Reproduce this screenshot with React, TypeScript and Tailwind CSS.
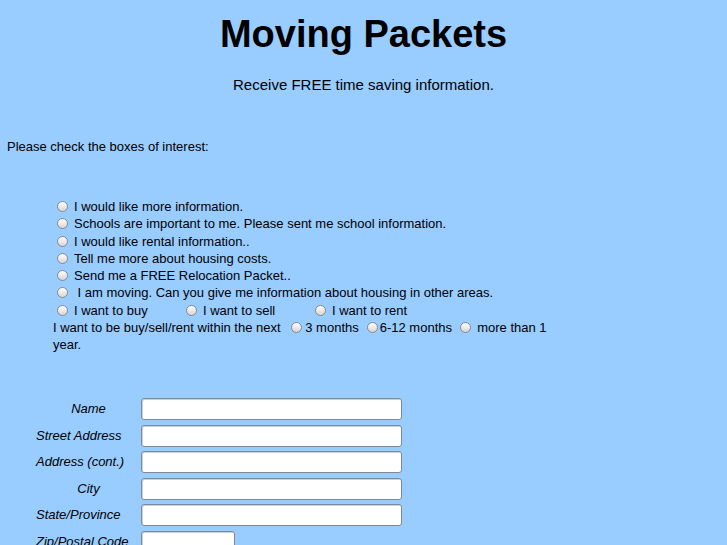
const Radio = ({ className = "" }: { className?: string }) => (
  <span
    className={
      "inline-block w-[11px] h-[11px] rounded-full border border-[#8a8a8a] bg-linear-to-b from-[#ffffff] to-[#d6d6d6] align-[-1px] " +
      className
    }
  />
);

const options = [
  "I would like more information.",
  "Schools are important to me. Please sent me school information.",
  "I would like rental information..",
  "Tell me more about housing costs.",
  "Send me a FREE Relocation Packet..",
  "\u00a0I am moving. Can you give me information about housing in other areas.",
];

const fields = [
  { label: "Name", center: true, wide: true },
  { label: "Street Address", center: false, wide: true },
  { label: "Address (cont.)", center: false, wide: true },
  { label: "City", center: true, wide: true },
  { label: "State/Province", center: false, wide: true },
  { label: "Zip/Postal Code", center: false, wide: false },
];

const App = () => {
  return (
    <div className="min-h-screen bg-[#99ccff] text-black font-['Liberation_Sans',Arial,sans-serif] overflow-hidden">
      <h1 className="mt-[12px] text-center text-[38px] leading-[44px] font-bold">Moving Packets</h1>
      <p className="mt-[20px] text-center text-[15px] leading-[18px]">
        Receive FREE time saving information.
      </p>
      <p className="mt-[45px] ml-[7px] text-[13px] leading-[16px]">Please check the boxes of interest:</p>

      <div className="mt-[43px] ml-[53px] w-[510px] text-[13px] leading-[17.25px]">
        {options.map((text) => (
          <div key={text} className="flex items-center h-[17.25px]">
            <Radio className="ml-[4px] mr-[6px]" />
            <span>{text}</span>
          </div>
        ))}
        <div className="grid grid-cols-[133px_129px_auto] h-[17.25px] items-center">
          <div className="flex items-center">
            <Radio className="ml-[4px] mr-[6px]" />
            <span>I want to buy</span>
          </div>
          <div className="flex items-center">
            <Radio className="mr-[6px]" />
            <span>I want to sell</span>
          </div>
          <div className="flex items-center">
            <Radio className="mr-[6px]" />
            <span>I want to rent</span>
          </div>
        </div>
        <div>
          I want to be buy/sell/rent within the next <Radio className="ml-[7px] mr-[3px]" />3 months
          <Radio className="ml-[8px] mr-[2px]" />6-12 months <Radio className="ml-[4px] mr-[3px]" /> more than 1
          year.
        </div>
      </div>

      <div className="mt-[44.75px] flex flex-col gap-[4.5px]">
        {fields.map((f) => (
          <div key={f.label} className="flex items-center h-[22px]">
            <div
              className={
                "ml-[36px] w-[105px] italic text-[13px] leading-[16px] " + (f.center ? "text-center" : "text-left")
              }
            >
              {f.label}
            </div>
            <input
              type="text"
              className={
                "h-[22px] rounded-[3px] border border-[#7b8a9a] bg-white shadow-[inset_1px_1px_0_#c9d1d9] outline-none " +
                (f.wide ? "w-[261px]" : "w-[94px]")
              }
            />
          </div>
        ))}
      </div>
    </div>
  );
};

export default App;
